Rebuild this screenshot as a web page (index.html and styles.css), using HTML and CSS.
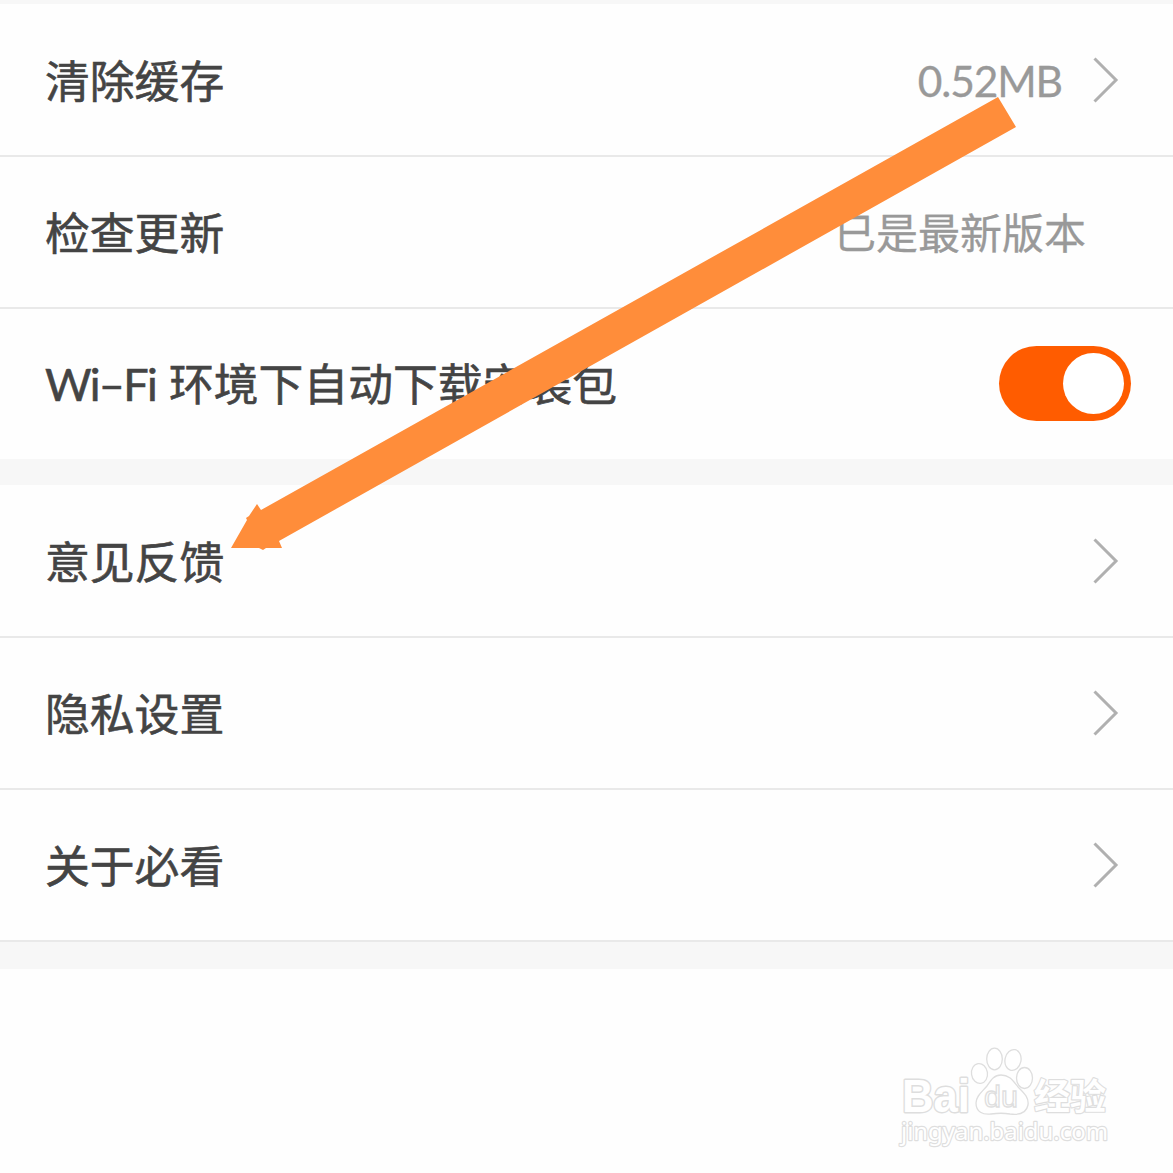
FILE: index.html
```html
<!DOCTYPE html>
<html lang="zh-CN">
<head>
<meta charset="utf-8">
<title>设置</title>
<link rel="stylesheet" href="styles.css">
</head>
<body>
<main class="screen">
  <section class="group">
    <div class="row">
      <span class="label">清除缓存</span>
      <span class="value size">0.52MB</span>
      <svg class="chevron" viewBox="0 0 26 46"><path d="M1.500 1.500 23 23 1.500 44.500"/></svg>
    </div>
    <div class="row">
      <span class="label">检查更新</span>
      <span class="value version">已是最新版本</span>
    </div>
    <div class="row">
      <span class="label"><span class="latin">Wi–Fi</span>环境下自动下载安装包</span>
      <span class="toggle"><span class="knob"></span></span>
    </div>
  </section>
  <section class="group">
    <div class="row">
      <span class="label">意见反馈</span>
      <svg class="chevron" viewBox="0 0 26 46"><path d="M1.500 1.500 23 23 1.500 44.500"/></svg>
    </div>
    <div class="row">
      <span class="label">隐私设置</span>
      <svg class="chevron" viewBox="0 0 26 46"><path d="M1.500 1.500 23 23 1.500 44.500"/></svg>
    </div>
    <div class="row last">
      <span class="label">关于必看</span>
      <svg class="chevron" viewBox="0 0 26 46"><path d="M1.500 1.500 23 23 1.500 44.500"/></svg>
    </div>
  </section>
  <section class="rest"></section>

  <svg class="arrow" viewBox="0 0 1173 1173">
    <polygon points="998,97 1016,127 279,541 282,548 266,548 263,550 259,548 231,548 247,520 246,518 249,516 257,504 261,510"/>
  </svg>

  <svg class="watermark" viewBox="880 1030 250 130">
    <g class="mark-text">
      <text class="brand" x="902" y="1112" textLength="68" lengthAdjust="spacingAndGlyphs">Bai</text>
      <text class="brand-cn" x="1034" y="1110" textLength="72" lengthAdjust="spacingAndGlyphs">经验</text>
      <text class="site" x="901" y="1140" textLength="207" lengthAdjust="spacingAndGlyphs">jingyan.baidu.com</text>
    </g>
    <g class="paw">
      <ellipse cx="979.500" cy="1073.500" rx="8" ry="10" transform="rotate(-8 979.500 1073.500)"/>
      <ellipse cx="994.500" cy="1059" rx="7.800" ry="10.800"/>
      <ellipse cx="1013" cy="1060" rx="8" ry="10.500" transform="rotate(12 1013 1060)"/>
      <ellipse cx="1024.500" cy="1078" rx="8" ry="10.500"/>
      <path d="M1001 1075C1010 1075 1013 1081 1019 1088C1025 1094 1029 1098 1028 1105C1026 1115 1017 1115 1010 1114C1004 1113 998 1113 991 1114C983 1115 976 1112 976 1103C976 1096 982 1092 987 1086C991 1080 994 1075 1001 1075Z"/>
    </g>
    <text class="du" x="984" y="1107" textLength="34" lengthAdjust="spacingAndGlyphs">du</text>
  </svg>
</main>
</body>
</html>
```
FILE: styles.css
```css
* {
  box-sizing: border-box;
}

body {
  margin: 0;
  background: #fefefe;
  font-family: "Noto Sans CJK SC", sans-serif;
}

.screen {
  position: relative;
  display: flex;
  flex-direction: column;
  gap: 26px;
  height: 1173px;
  padding-top: 4px;
  overflow: hidden;
  background: #f7f7f7;
}

.group,
.rest {
  background: #fefefe;
}

.rest {
  flex: 1;
  margin-top: 1px;
}

.row {
  display: flex;
  align-items: center;
  height: 152px;
  padding: 0 54px 0 45px;
  border-bottom: 2px solid #e9e9e9;
}

.row:first-child {
  height: 153px;
}

.row:last-child {
  height: 150px;
  border-bottom: 0;
}

.row.last {
  height: 152px;
  border-bottom: 2px solid #e9e9e9;
}

.label {
  margin: 0 auto 2px 0;
  color: #444;
  font-size: 44.8px;
  line-height: 66px;
  white-space: nowrap;
  -webkit-text-stroke: 0.6px #444;
}

.latin {
  display: inline-block;
  width: 124px;
  font-family: Lato, sans-serif;
  font-size: 45px;
  letter-spacing: -1.7px;
}

.value {
  color: #999;
  white-space: nowrap;
  -webkit-text-stroke: 0.3px #999;
}

.size {
  margin: 2px 31px 0 0;
  font-family: Lato, sans-serif;
  font-size: 42.5px;
  letter-spacing: -1.1px;
}

.version {
  margin: 0 33px 4px 0;
  font-size: 42px;
}

.chevron {
  width: 26px;
  height: 46px;
  fill: none;
  stroke: #b0b0b0;
  stroke-width: 3;
}

.toggle {
  display: flex;
  align-items: center;
  justify-content: flex-end;
  width: 132px;
  height: 75px;
  margin: 0 -12px 2px 0;
  padding-right: 7px;
  border-radius: 38px;
  background: #ff5c00;
}

.knob {
  width: 61px;
  height: 61px;
  border-radius: 50%;
  background: #fff;
}

.arrow {
  position: absolute;
  inset: 0;
  width: 1173px;
  height: 1173px;
  fill: #ff8d3a;
}

.watermark {
  position: absolute;
  left: 880px;
  top: 1030px;
  width: 250px;
  height: 130px;
  fill: #fff;
  stroke: #dedede;
  stroke-width: 1.3;
}

.mark-text text {
  paint-order: stroke;
  stroke-width: 2.4;
  stroke-linejoin: round;
}

.mark-text .brand {
  font: bold 46px "Liberation Sans", sans-serif;
  stroke-width: 3;
}

.brand-cn {
  font: bold 36px "Noto Sans CJK SC", sans-serif;
}

.site {
  font: 24px "Noto Sans", sans-serif;
}

.du {
  font: 30px "Liberation Sans", sans-serif;
}
```
